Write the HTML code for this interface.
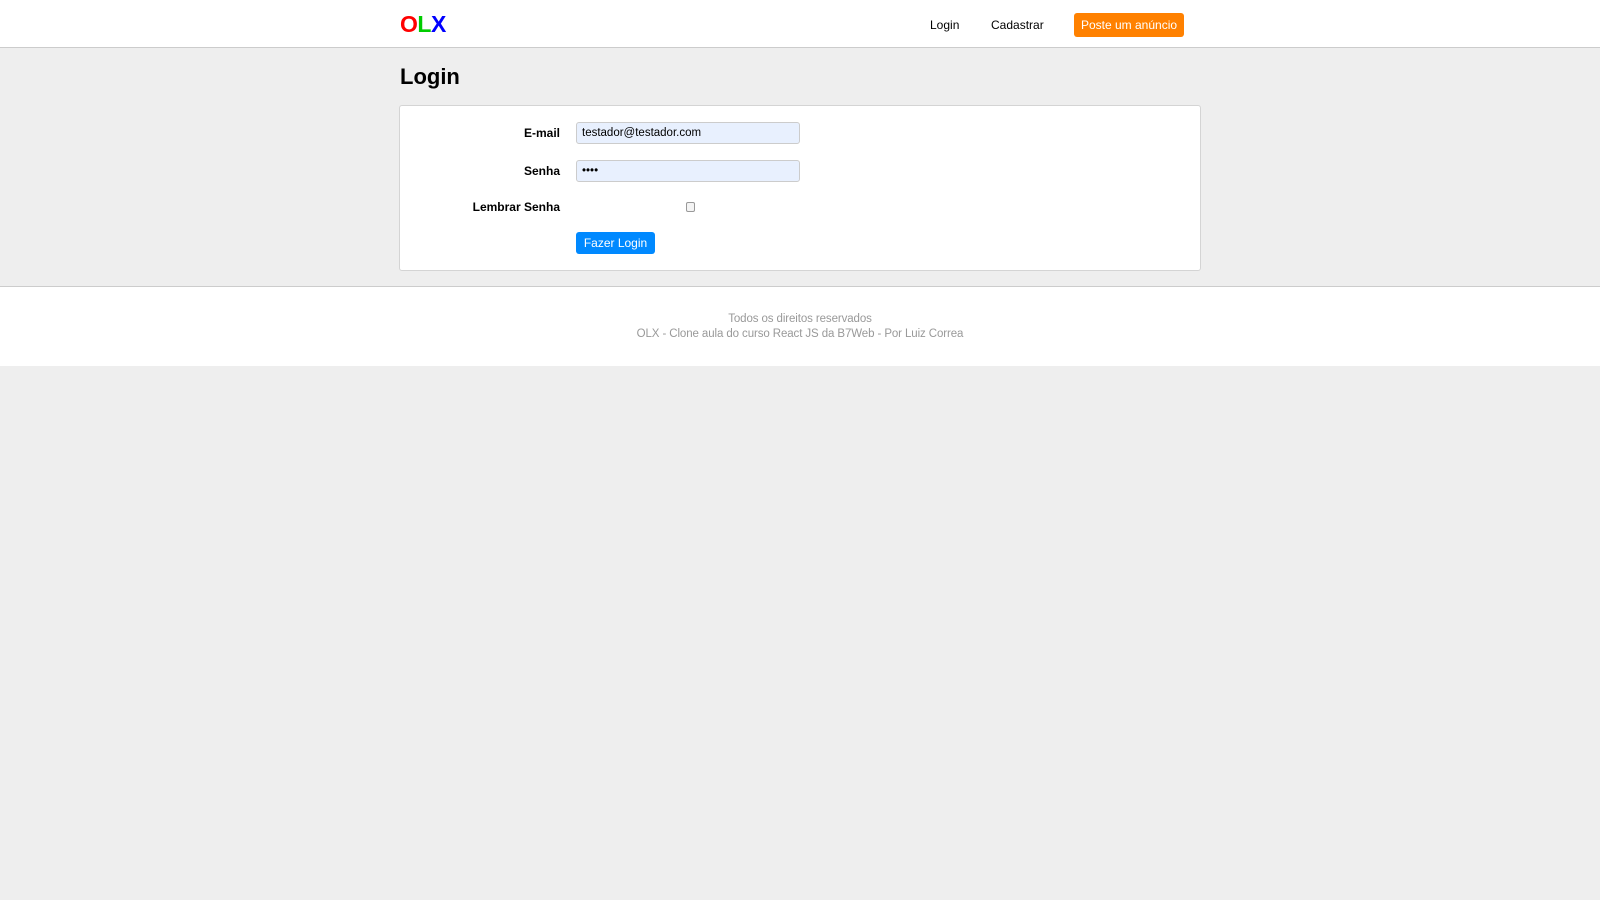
<!DOCTYPE html>
<html><head><meta charset="utf-8"><style>
*{box-sizing:border-box;margin:0;padding:0}
body{width:1600px;height:900px;background:#eeeeee;font-family:"Liberation Sans",Arial,sans-serif;position:relative;overflow:hidden}
.hdr{position:absolute;left:0;top:0;width:1600px;height:48px;background:#fff;border-bottom:1px solid #ccc}
.logo{position:absolute;left:400px;top:11px;font-size:23px;font-weight:bold;letter-spacing:-0.5px}
.nav{position:absolute;top:18px;font-size:12px;color:#000}
.post{position:absolute;left:1074px;top:13px;width:110px;height:24px;background:#ff8100;color:#fff;font-size:12px;border-radius:3px;text-align:center;line-height:24px}
h1{position:absolute;left:400px;top:64px;font-size:22px;font-weight:bold;color:#000}
.card{position:absolute;left:399px;top:105px;width:802px;height:166px;background:#fff;border-radius:3px;border:1px solid #d4d4d4}
.lbl{position:absolute;right:1040px;font-size:12px;font-weight:bold;color:#000}
.inp{position:absolute;left:576px;width:224px;height:22px;background:#e8f0fe;border:1px solid #ccc;border-radius:3px;font-size:11.5px;padding-left:5px;line-height:20px}
.chk{position:absolute;left:686px;top:202px;width:9px;height:10px;border:1px solid #999;border-radius:2px;background:#f4f4f4}
.btn{position:absolute;left:576px;top:232px;width:79px;height:22px;background:#0089ff;color:#fff;font-size:12px;border-radius:3px;text-align:center;line-height:22px}
.ftr{position:absolute;left:0;top:286px;width:1600px;height:80px;background:#fff;border-top:1px solid #ccc;text-align:center;color:#999;font-size:11.5px;padding-top:25px;line-height:15px;letter-spacing:-0.1px}
</style></head><body>
<div class="hdr">
<div class="logo"><span style="color:#f00">O</span><span style="color:#0c0">L</span><span style="color:#00f">X</span></div>
<div class="nav" style="left:930px">Login</div>
<div class="nav" style="left:991px">Cadastrar</div>
<div class="post">Poste um anúncio</div>
</div>
<h1>Login</h1>
<div class="card"></div>
<div class="lbl" style="top:126px">E-mail</div>
<div class="inp" style="top:122px">testador@testador.com</div>
<div class="lbl" style="top:164px">Senha</div>
<div class="inp" style="top:160px">••••</div>
<div class="lbl" style="top:200px">Lembrar Senha</div>
<div class="chk"></div>
<div class="btn">Fazer Login</div>
<div class="ftr">Todos os direitos reservados<br>OLX - Clone aula do curso React JS da B7Web - Por Luiz Correa</div>
</body></html>
